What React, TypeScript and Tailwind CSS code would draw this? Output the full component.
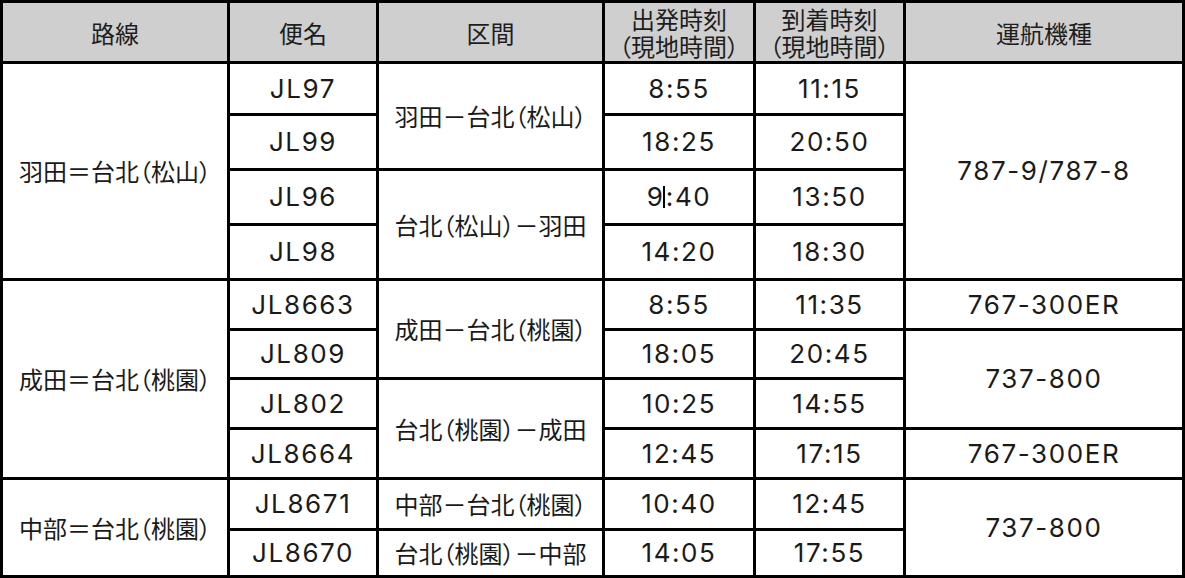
import React from "react";

const jp =
  "font-['Noto_Sans_CJK_JP',sans-serif] text-[24px] [font-feature-settings:'palt'] leading-none";
const lat =
  "font-['Inter','Noto_Sans_CJK_JP',sans-serif] text-[26px] tracking-[1.6px] leading-none";

function Cell({
  children,
  className = "",
  kind = "lat",
}: {
  children: React.ReactNode;
  className?: string;
  kind?: "lat" | "jp";
}) {
  return (
    <div
      className={
        "flex items-center justify-center bg-white text-[#1a1a1a] whitespace-nowrap " +
        (kind === "jp" ? jp : lat) +
        " " +
        className
      }
    >
      {children}
    </div>
  );
}

function Head({ children }: { children: React.ReactNode }) {
  return (
    <div className="flex flex-col items-center justify-center bg-[#cfcfcf] text-[#1e1e1e] whitespace-nowrap font-['Noto_Sans_CJK_JP',sans-serif] text-[24px] [font-feature-settings:'palt'] leading-[27px]">
      {children}
    </div>
  );
}

export default function App() {
  return (
    <div className="w-[1185px] h-[578px] bg-white">
      <div className="grid w-[1185px] grid-cols-[224px_146px_223px_148px_147px_276px] grid-rows-[58px_49px_52px_52px_52px_47px_46px_47px_47px_48px_44px] gap-[3px] bg-black p-[3px]">
        <Head>路線</Head>
        <Head>便名</Head>
        <Head>区間</Head>
        <Head>
          <div className="h-[27px] overflow-visible">出発時刻</div>
          <div className="h-[27px] overflow-visible">（現地時間）</div>
        </Head>
        <Head>
          <div className="h-[27px] overflow-visible">到着時刻</div>
          <div className="h-[27px] overflow-visible">（現地時間）</div>
        </Head>
        <Head>運航機種</Head>

        {/* Group 1 */}
        <Cell kind="jp" className="row-span-4">羽田＝台北（松山）</Cell>
        <Cell>JL97</Cell>
        <Cell kind="jp" className="row-span-2">羽田－台北（松山）</Cell>
        <Cell>8:55</Cell>
        <Cell>11:15</Cell>
        <Cell className="row-span-4">787-9/787-8</Cell>

        <Cell>JL99</Cell>
        <Cell>18:25</Cell>
        <Cell>20:50</Cell>

        <Cell>JL96</Cell>
        <Cell kind="jp" className="row-span-2">台北（松山）－羽田</Cell>
        <Cell>
          9<span className="ml-[-1px] mr-[1px] inline-block h-[22px] w-[1.5px] bg-black align-middle" />:40
        </Cell>
        <Cell>13:50</Cell>

        <Cell>JL98</Cell>
        <Cell>14:20</Cell>
        <Cell>18:30</Cell>

        {/* Group 2 */}
        <Cell kind="jp" className="row-span-4">成田＝台北（桃園）</Cell>
        <Cell>JL8663</Cell>
        <Cell kind="jp" className="row-span-2">成田－台北（桃園）</Cell>
        <Cell>8:55</Cell>
        <Cell>11:35</Cell>
        <Cell>767-300ER</Cell>

        <Cell>JL809</Cell>
        <Cell>18:05</Cell>
        <Cell>20:45</Cell>
        <Cell className="row-span-2">737-800</Cell>

        <Cell>JL802</Cell>
        <Cell kind="jp" className="row-span-2">台北（桃園）－成田</Cell>
        <Cell>10:25</Cell>
        <Cell>14:55</Cell>

        <Cell>JL8664</Cell>
        <Cell>12:45</Cell>
        <Cell>17:15</Cell>
        <Cell>767-300ER</Cell>

        {/* Group 3 */}
        <Cell kind="jp" className="row-span-2">中部＝台北（桃園）</Cell>
        <Cell>JL8671</Cell>
        <Cell kind="jp">中部－台北（桃園）</Cell>
        <Cell>10:40</Cell>
        <Cell>12:45</Cell>
        <Cell className="row-span-2">737-800</Cell>

        <Cell>JL8670</Cell>
        <Cell kind="jp">台北（桃園）－中部</Cell>
        <Cell>14:05</Cell>
        <Cell>17:55</Cell>
      </div>
    </div>
  );
}
